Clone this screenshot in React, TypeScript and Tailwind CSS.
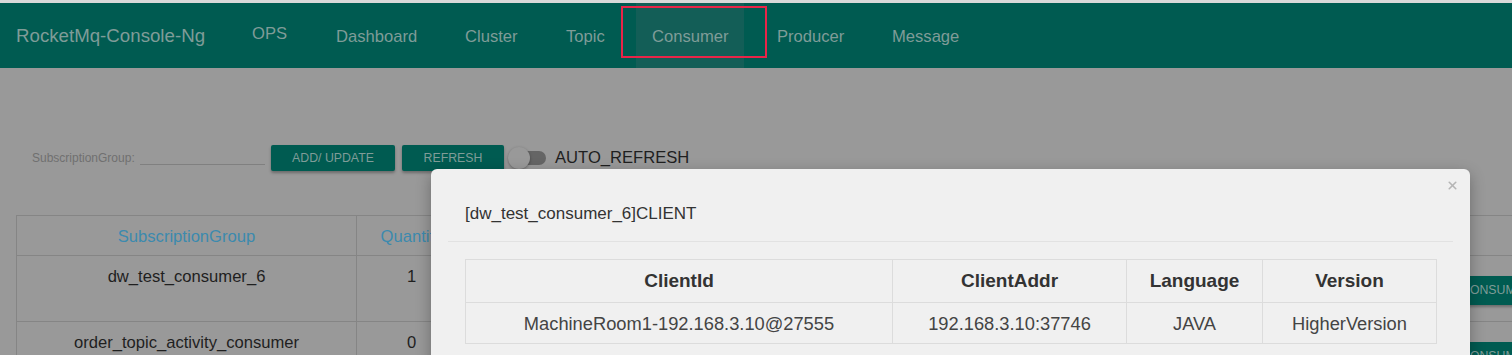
import { X } from "lucide-react";

const CLIENTS = [
  {
    id: "MachineRoom1-192.168.3.10@27555",
    addr: "192.168.3.10:37746",
    lang: "JAVA",
    version: "HigherVersion",
  },
];

export default function App() {
  return (
    <div className="relative h-[355px] w-[1512px] overflow-hidden bg-[#999999] font-['Liberation_Sans',Arial,sans-serif]">
      {/* top strip */}
      <div className="h-[3px] bg-[#d9d9d9]" />

      {/* Navbar (dimmed by the modal backdrop) */}
      <nav className="flex h-[65px] items-stretch bg-[#005b51] text-[16.6px] text-[#7f9c98]">
        <div className="flex w-[236px] items-center pt-[2px] pl-[16px] text-[18.7px]">RocketMq-Console-Ng</div>
        <div className="flex w-[84px] items-center pb-[2px] pl-[16px]">OPS</div>
        <div className="flex w-[129px] items-center pt-[4px] pl-[16px]">Dashboard</div>
        <div className="flex w-[101px] items-center pt-[4px] pl-[16px]">Cluster</div>
        <div className="flex w-[86px] items-center pt-[4px] pl-[16px]">Topic</div>
        <div className="flex w-[108px] items-center bg-[#135e57] pt-[4px] pl-[16px]">Consumer</div>
        <div className="flex w-[132px] items-center pt-[4px] pl-[33px]">Producer</div>
        <div className="flex items-center pt-[4px] pl-[16px]">Message</div>
      </nav>

      {/* filter row */}
      <div className="mt-[77px] flex items-center pl-[32px]">
        <span className="w-[101px] whitespace-nowrap text-[12px] text-[#707070]">SubscriptionGroup:</span>
        <div className="ml-[7px] mt-[12px] h-[1px] w-[125px] bg-[#808080]" />
        <button className="ml-[6px] h-[26px] w-[124px] rounded-[2px] bg-[#005b51] text-[12.3px] text-[#7f9c98] shadow-[0_2px_3px_rgba(0,0,0,0.3)]">
          ADD/ UPDATE
        </button>
        <button className="ml-[7px] h-[26px] w-[102px] rounded-[2px] bg-[#005b51] text-[12.3px] text-[#7f9c98] shadow-[0_2px_3px_rgba(0,0,0,0.3)]">
          REFRESH
        </button>
        <div className="relative ml-[4px] h-[22px] w-[40px]">
          <div className="absolute left-[8px] top-[4px] h-[14px] w-[30px] rounded-full bg-[#656565]" />
          <div className="absolute left-0 top-0 h-[22px] w-[22px] rounded-full bg-[#999999] shadow-[0_1px_3px_rgba(0,0,0,0.35)]" />
        </div>
        <span className="ml-[7px] text-[16.6px] text-[#1f1f1f]">AUTO_REFRESH</span>
      </div>

      {/* consumer table (behind modal) */}
      <table className="ml-[16px] mt-[44px] w-[1560px] border-collapse text-[16.6px] text-[#1f1f1f]">
        <thead>
          <tr className="h-[40px]">
            <th className="w-[340px] border border-[#858585] pt-[3px] font-normal text-[#3c8aae]">SubscriptionGroup</th>
            <th className="w-[110px] border border-[#858585] pt-[3px] font-normal text-[#3c8aae]">Quantity</th>
            <th className="border border-[#858585] font-normal" />
          </tr>
        </thead>
        <tbody>
          <tr className="h-[66px]">
            <td className="border border-[#858585] pb-[22px] text-center">dw_test_consumer_6</td>
            <td className="border border-[#858585] pb-[22px] text-center">1</td>
            <td className="border border-[#858585]" />
          </tr>
          <tr className="h-[66px]">
            <td className="border border-[#858585] pb-[22px] text-center">order_topic_activity_consumer</td>
            <td className="border border-[#858585] pb-[22px] text-center">0</td>
            <td className="border border-[#858585]" />
          </tr>
        </tbody>
      </table>

      {/* CONSUMER buttons, mostly hidden behind the modal */}
      <button className="absolute left-[1455px] top-[276px] h-[29px] w-[100px] rounded-[2px] bg-[#005b51] pl-[6px] text-left text-[12.3px] text-[#7f9c98] shadow-[0_2px_3px_rgba(0,0,0,0.3)]">
        CONSUMER
      </button>
      <button className="absolute left-[1455px] top-[342px] h-[29px] w-[100px] rounded-[2px] bg-[#005b51] pl-[6px] text-left text-[12.3px] text-[#7f9c98]">
        CONSUMER
      </button>

      {/* red annotation box */}
      <div className="absolute left-[621px] top-[6px] h-[52px] w-[146px] border-2 border-[#ea2448]" />

      {/* modal */}
      <div className="absolute left-[431px] top-[169px] w-[1039px] rounded-[6px] bg-[#f0f0f0] shadow-[0_5px_15px_rgba(0,0,0,0.3)]">
        <button className="absolute right-[11px] top-[10px] text-[#b5b5b5]">
          <X className="h-[13px] w-[13px]" strokeWidth={3} />
        </button>
        <div className="mx-[17px] border-b border-[#e2e2e2] pb-[16px] pl-[17px] pt-[34px] text-[17px] leading-[22px] text-[#333333]">
          [dw_test_consumer_6]CLIENT
        </div>
        <div className="px-[34px] pb-[20px] pt-[17px]">
          <table className="w-[972px] border-collapse text-[18.3px] text-[#333333]">
            <thead>
              <tr className="h-[43px]">
                <th className="w-[427px] border border-[#dcdcdc] text-[19px] font-bold">ClientId</th>
                <th className="w-[234px] border border-[#dcdcdc] text-[19px] font-bold">ClientAddr</th>
                <th className="w-[136px] border border-[#dcdcdc] text-[19px] font-bold">Language</th>
                <th className="border border-[#dcdcdc] text-[19px] font-bold">Version</th>
              </tr>
            </thead>
            <tbody>
              {CLIENTS.map((c) => (
                <tr key={c.id} className="h-[41px] text-[#444444]">
                  <td className="border border-[#dcdcdc] pt-[2px] text-center">{c.id}</td>
                  <td className="border border-[#dcdcdc] pt-[2px] text-center">{c.addr}</td>
                  <td className="border border-[#dcdcdc] pt-[2px] text-center">{c.lang}</td>
                  <td className="border border-[#dcdcdc] pt-[2px] text-center">{c.version}</td>
                </tr>
              ))}
            </tbody>
          </table>
        </div>
      </div>
    </div>
  );
}
